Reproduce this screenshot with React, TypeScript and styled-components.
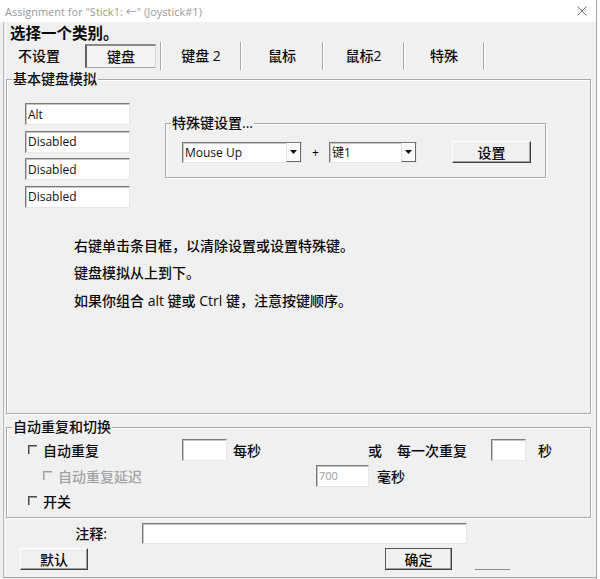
import React from "react";
import styled, { createGlobalStyle } from "styled-components";

const FONT = `"Open Sans", "Noto Sans CJK SC", sans-serif`;

const Global = createGlobalStyle`
  html, body { margin: 0; padding: 0; background: #fff; }
  body { font-family: ${FONT}; color: #0a0a0a; font-weight: 500; }
  * { box-sizing: border-box; }
`;

const Window = styled.div`
  width: 597px;
  height: 579px;
  background: #f0f0f0;
  border-right: 1px solid #a6a6a6;
  display: flex;
  flex-direction: column;
`;

const TitleBar = styled.div`
  height: 22px;
  flex: none;
  background: #fff;
  display: flex;
  align-items: center;
  justify-content: space-between;
  padding: 0 9px 0 5px;
`;

const TitleText = styled.span`
  font-family: ${FONT};
  font-size: 11px;
  font-weight: 400;
  color: #9a9a9a;
  white-space: nowrap;
`;

const Body = styled.div`
  height: 556px;
  flex: none;
  margin-left: 3px;
  border-left: 1px solid #b8b8b8;
  border-bottom: 1px solid #a8a8a8;
  padding: 0 5px 0 2px;
  display: flex;
  flex-direction: column;
`;

const Heading = styled.div`
  margin: 2px 0 0 4px;
  font-size: 15.5px;
  line-height: 18px;
  font-weight: 700;
`;

const TabRow = styled.div`
  display: flex;
  align-items: center;
  height: 27px;
`;

const Tab = styled.div<{ $w: number }>`
  width: ${(p) => p.$w}px;
  text-align: center;
  font-size: 14px;
  line-height: 16px;
`;

const ActiveTab = styled.div`
  width: 71px;
  height: 24px;
  margin-left: 13px;
  display: flex;
  align-items: center;
  justify-content: center;
  font-size: 14px;
  background: #f4f4f4;
  border: 1px solid #a8a8a8;
  border-top: 2px solid #8a8a8a;
  border-left: 2px solid #626262;
  border-right: 1px solid #d8d8d8;
`;

const TabSep = styled.div<{ $ml?: number }>`
  width: 2px;
  height: 28px;
  margin-left: ${(p) => p.$ml ?? 0}px;
  border-left: 1px solid #a8a8a8;
  border-right: 1px solid #fff;
`;

const Group = styled.div<{ $h: number; $mt: number; $w?: number; $ml?: number }>`
  height: ${(p) => p.$h}px;
  margin-top: ${(p) => p.$mt}px;
  margin-left: ${(p) => p.$ml ?? 0}px;
  ${(p) => (p.$w ? `width: ${p.$w}px; flex: none;` : "")}
  border: 1px solid #aaaaaa;
  box-shadow: inset 1px 1px 0 #fff, 1px 1px 0 #fff;
  display: flex;
  flex-direction: column;
`;

const GroupTitle = styled.div`
  align-self: flex-start;
  margin: -9px 0 0 5px;
  padding: 0 1px;
  background: #f0f0f0;
  font-size: 14px;
  line-height: 16px;
  white-space: nowrap;
`;

const KeyRow = styled.div`
  display: flex;
  align-items: flex-start;
  margin-top: 16px;
  padding-left: 18px;
`;

const InputsCol = styled.div`
  display: flex;
  flex-direction: column;
  gap: 5.5px;
  width: 105px;
`;

const Sunken = styled.div<{ $w?: number; $h?: number; $muted?: boolean }>`
  ${(p) => (p.$w ? `width: ${p.$w}px; flex: none;` : "")}
  height: ${(p) => p.$h ?? 22}px;
  background: #fff;
  border-top: 1px solid #7a7a7a;
  border-left: 1px solid #7a7a7a;
  border-right: 1px solid #e6e6e6;
  border-bottom: 1px solid #e6e6e6;
  box-shadow: inset 1px 1px 0 #c4c4c4;
  display: flex;
  align-items: center;
  padding-left: 2px;
  font-family: ${FONT};
  font-size: ${(p) => (p.$muted ? 11 : 12)}px;
  font-weight: 400;
  color: ${(p) => (p.$muted ? "#9a9a9a" : "#111")};
  white-space: nowrap;
`;

const SpecialRow = styled.div`
  display: flex;
  align-items: center;
  margin-top: 10px;
  padding-left: 16px;
`;

const ComboText = styled.span`
  flex: 1;
  font-size: 12px;
`;

const ComboArrow = styled.span`
  width: 15px;
  height: 100%;
  display: flex;
  align-items: center;
  justify-content: center;
  background: #fafafa;
  border-left: 1px solid #e2e2e2;
  border-right: 1px solid #6a6a6a;
  border-bottom: 1px solid #6a6a6a;
`;

const Plus = styled.span`
  width: 27px;
  text-align: center;
  font-size: 12px;
`;

const Button = styled.div<{ $w: number; $ml: number; $default?: boolean }>`
  width: ${(p) => p.$w}px;
  height: 22px;
  margin-left: ${(p) => p.$ml}px;
  flex: none;
  display: flex;
  align-items: center;
  justify-content: center;
  font-size: 14px;
  background: #f0f0f0;
  border-top: 1px solid ${(p) => (p.$default ? "#555" : "#fff")};
  border-left: 1px solid ${(p) => (p.$default ? "#555" : "#fff")};
  border-right: 1px solid #404040;
  border-bottom: 1px solid #404040;
  box-shadow: inset -1px -1px 0 #a0a0a0;
`;

const TextBlock = styled.div`
  margin: 24px 0 0 67px;
  font-size: 14px;
  line-height: 27.5px;
`;

const OptRow = styled.div<{ $mt: number; $pl?: number }>`
  display: flex;
  align-items: center;
  height: 22px;
  margin-top: ${(p) => p.$mt}px;
  padding-left: ${(p) => p.$pl ?? 0}px;
`;

const Cell = styled.div<{ $w?: number; $pl?: number }>`
  ${(p) => (p.$w ? `width: ${p.$w}px; flex: none;` : "")}
  padding-left: ${(p) => p.$pl ?? 0}px;
  display: flex;
  align-items: center;
  font-size: 14px;
  white-space: nowrap;
`;

const Check = styled.span<{ $disabled?: boolean }>`
  width: 9px;
  height: 9px;
  flex: none;
  border-top: 1px solid ${(p) => (p.$disabled ? "#9c9c9c" : "#4a4a4a")};
  border-left: 1px solid ${(p) => (p.$disabled ? "#9c9c9c" : "#4a4a4a")};
  box-shadow: inset 1px 1px 0 ${(p) => (p.$disabled ? "#c8c8c8" : "#9a9a9a")};
`;

const CheckLabel = styled.span<{ $disabled?: boolean }>`
  margin-left: 6px;
  font-size: 14px;
  color: ${(p) => (p.$disabled ? "#a3a3a3" : "#0a0a0a")};
`;

const Gap = styled.span<{ $ml: number }>`
  margin-left: ${(p) => p.$ml}px;
`;

const CommentRow = styled.div`
  display: flex;
  align-items: center;
  height: 22px;
  margin-top: 4px;
`;

const CommentLabel = styled.div`
  width: 101px;
  text-align: right;
  font-size: 14px;
`;

const ButtonRow = styled.div`
  display: flex;
  align-items: center;
  margin-top: 4px;
`;

const Ghost = styled.div`
  width: 35px;
  height: 1px;
  margin: 20px 0 0 23px;
  background: #8a8a8a;
`;

const Arrow = () => (
  <svg width="7" height="4" viewBox="0 0 7 4">
    <path d="M0 0h7L3.5 4z" fill="#111" />
  </svg>
);

const Combo = ({ w, text }: { w: number; text: string }) => (
  <Sunken $w={w} $h={21} style={{ paddingRight: 0 }}>
    <ComboText>{text}</ComboText>
    <ComboArrow>
      <Arrow />
    </ComboArrow>
  </Sunken>
);

export default function App() {
  return (
    <>
      <Global />
      <Window>
        <TitleBar>
          <TitleText>Assignment for "Stick1: ←" (Joystick#1)</TitleText>
          <svg width="10" height="10" viewBox="0 0 10 10">
            <path d="M0.5 0.5L9.5 9.5M9.5 0.5L0.5 9.5" stroke="#707070" strokeWidth="1" />
          </svg>
        </TitleBar>
        <Body>
          <Heading>选择一个类别。</Heading>
          <TabRow>
            <Tab $w={66}>不设置</Tab>
            <ActiveTab>键盘</ActiveTab>
            <TabSep $ml={4} />
            <Tab $w={78}>键盘 2</Tab>
            <TabSep />
            <Tab $w={80}>鼠标</Tab>
            <TabSep />
            <Tab $w={79}>鼠标2</Tab>
            <TabSep />
            <Tab $w={78}>特殊</Tab>
            <TabSep />
          </TabRow>

          <Group $h={335} $mt={10}>
            <GroupTitle>基本键盘模拟</GroupTitle>
            <KeyRow>
              <InputsCol>
                <Sunken>Alt</Sunken>
                <Sunken>Disabled</Sunken>
                <Sunken>Disabled</Sunken>
                <Sunken>Disabled</Sunken>
              </InputsCol>
              <Group $h={55} $mt={20} $w={381} $ml={35}>
                <GroupTitle>特殊键设置...</GroupTitle>
                <SpecialRow>
                  <Combo w={120} text="Mouse Up" />
                  <Plus>+</Plus>
                  <Combo w={88} text="键1" />
                  <Button $w={79} $ml={35}>设置</Button>
                </SpecialRow>
              </Group>
            </KeyRow>
            <TextBlock>
              <div>右键单击条目框，以清除设置或设置特殊键。</div>
              <div>键盘模拟从上到下。</div>
              <div>如果你组合 alt 键或 Ctrl 键，注意按键顺序。</div>
            </TextBlock>
          </Group>

          <Group $h={91} $mt={13}>
            <GroupTitle>自动重复和切换</GroupTitle>
            <OptRow $mt={3.5} $pl={21}>
              <Cell $w={154}>
                <Check />
                <CheckLabel>自动重复</CheckLabel>
              </Cell>
              <Sunken $w={45} />
              <Cell $w={141} $pl={6}>每秒</Cell>
              <Cell $w={123}>
                或<Gap $ml={15}>每一次重复</Gap>
              </Cell>
              <Sunken $w={35} />
              <Cell $pl={12}>秒</Cell>
            </OptRow>
            <OptRow $mt={4} $pl={21}>
              <Cell $w={288} $pl={15}>
                <Check $disabled />
                <CheckLabel $disabled>自动重复延迟</CheckLabel>
              </Cell>
              <Sunken $w={53} $muted>700</Sunken>
              <Cell $pl={8}>毫秒</Cell>
            </OptRow>
            <OptRow $mt={3} $pl={21}>
              <Cell>
                <Check />
                <CheckLabel>开关</CheckLabel>
              </Cell>
            </OptRow>
          </Group>

          <CommentRow>
            <CommentLabel>注释:</CommentLabel>
            <Gap $ml={35} />
            <Sunken $w={325} $h={21} />
          </CommentRow>

          <ButtonRow>
            <Button $w={68} $ml={14}>默认</Button>
            <Button $w={67} $ml={297} $default>确定</Button>
            <Ghost />
          </ButtonRow>
        </Body>
      </Window>
    </>
  );
}
